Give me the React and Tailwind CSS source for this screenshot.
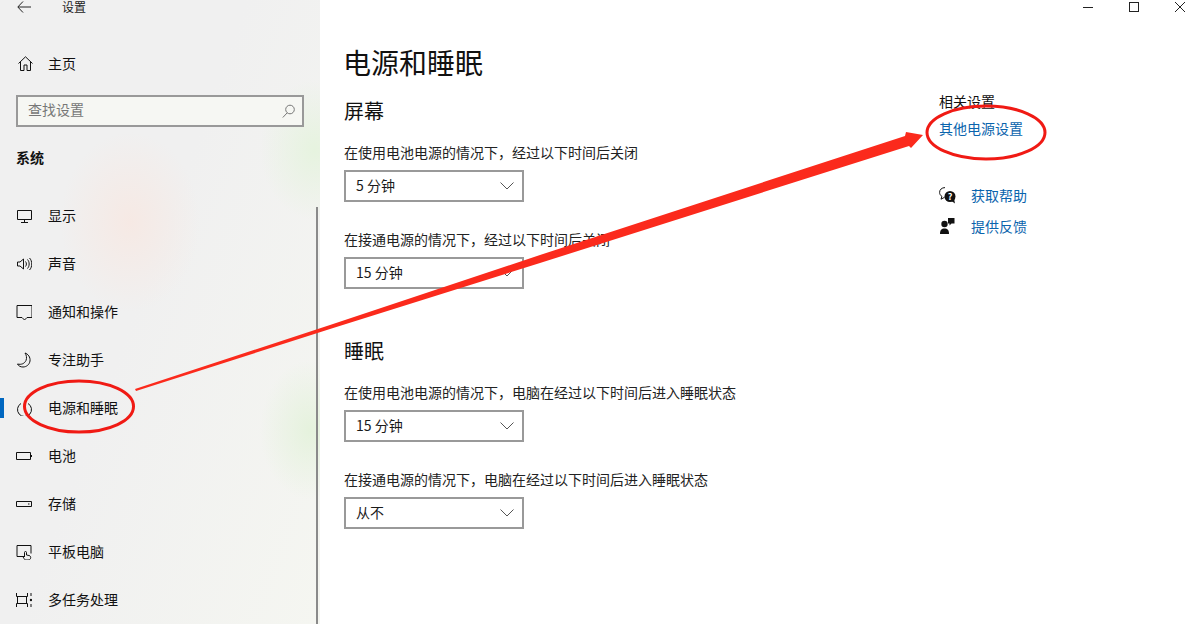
const font = { fontFamily: '"Noto Sans CJK SC", "Noto Sans", sans-serif' };

function Ico({ children, w = 16, h = 16, cls = "" }) {
  return (
    <svg width={w} height={h} viewBox={`0 0 ${w} ${h}`} fill="none" stroke="#111" strokeWidth="1" className={"shrink-0 " + cls}>
      {children}
    </svg>
  );
}

const items = [
  ["显示", <Ico><path d="M1.500 2.500h14v9h-14zM8.500 11.500v3M5 14.500h7" /></Ico>],
  ["声音", <Ico><path d="M1.500 6v4h2.500l3.500 3V3L4 6zM9.500 5.500c1.200 1.400 1.200 3.600 0 5M11.500 3.500c2.200 2.500 2.200 6.500 0 9M13.500 2c3 3 3 9 0 12" /></Ico>],
  ["通知和操作", <Ico><path d="M1 1.500h15v12h-5l-2.500 2.500L6 13.500H1z" /></Ico>],
  ["专注助手", <Ico><path d="M9 1c3 1 5.500 4 5 8-.5 3.500-3.500 6-7 6-2.500 0-4.500-1-5.500-3 4 1 7-.5 8.500-3.500C11 6 10.500 3 9 1z" /></Ico>],
  ["电源和睡眠", <Ico><path d="M5 3.500a7 7 0 1 0 7 0M8.500 1v7" /></Ico>],
  ["电池", <Ico><path d="M.5 4.500h14v7H.5zM15.500 7v2" /></Ico>],
  ["存储", <Ico><path d="M.5 5.500h15v5H.5zM12 8h1.500" /></Ico>],
  ["平板电脑", <Ico><path d="M9 12.500H1V1.500h14v8M8.500 13V8.500a1 1 0 0 1 2 0V11l2.500.5c1.500.3 2 1.500 1.500 3-.4 1-1 1.500-2.500 1.500h-2c-1 0-1.500-.5-2-1.500L6.500 12" /></Ico>],
  ["多任务处理", <Ico><path d="M.5 1v3.500h11V1M.5 15v-3.500h11V15M1.500 5v6M10.500 5v6M15 1v3M15 12v3" /><circle cx="15" cy="8" r="1.200" fill="#111" stroke="none" /></Ico>],
];

function Select({ value }) {
  return (
    <div className="flex h-8 w-[180px] items-center justify-between border-2 border-[#999999] pb-[2px] pl-[10px] pr-[8px] text-[14px] leading-5 text-[#1a1a1a]">
      <span>{value}</span>
      <svg width="14" height="8" viewBox="0 0 14 8" fill="none" stroke="#555" strokeWidth="1" className="mt-[2px]">
        <path d="M.5.500 7 7l6.500-6.500" />
      </svg>
    </div>
  );
}

export default function App() {
  return (
    <div style={font} className="relative flex h-[624px] w-[1196px] overflow-hidden bg-white text-black">
      <aside className="relative flex h-[624px] w-[320px] shrink-0 flex-col bg-[#f1f1f1] bg-[radial-gradient(ellipse_70px_90px_at_130px_222px,#f6e9e4,transparent),radial-gradient(ellipse_55px_70px_at_315px_150px,#e6f3df,transparent),radial-gradient(ellipse_50px_70px_at_310px_430px,#e5f2dd,transparent),linear-gradient(110deg,#f0f0f0_45%,#f5f6f1)]">
        <div className="flex h-[14px] items-center pl-[17px]">
          <svg width="14" height="12" viewBox="0 0 14 12" fill="none" stroke="#222" strokeWidth="1"><path d="M14 6H1M6 .5.800 6 6 11.500" /></svg>
          <span className="ml-[31px] text-[12px] leading-[12px] text-[#222]">设置</span>
        </div>
        <div className="mt-[39px] flex h-5 items-center pl-[18px] text-[14px] leading-5 text-[#111]">
          <Ico w={15} h={15}><path d="M.5 7.500 7.500.8l7 6.700M2.500 6v8.500h3.500V9h3v5.500h3.500V6" /></Ico>
          <span className="ml-[15px]">主页</span>
        </div>
        <div className="ml-4 mt-[22px] flex h-8 w-[288px] items-center justify-between border-2 border-[#999999] bg-[#f6f7f3] pb-[4px] pl-[10px] pr-[7px] text-[14px] leading-5 text-[#777]">
          <span>查找设置</span>
          <svg width="13" height="14" viewBox="0 0 13 14" fill="none" stroke="#777" strokeWidth="1" className="mt-[4px]"><circle cx="8" cy="5.500" r="4.300" /><path d="M5 9 .8 13.500" /></svg>
        </div>
        <div className="ml-4 mt-[20px] text-[14px] font-bold leading-5 text-[#111]">系统</div>
        <nav className="mt-[25px] flex flex-col">
          {items.map(([label, icon]) => (
            <div key={label} className="relative flex h-12 items-center pl-4 text-[14px] leading-5 text-[#111]">
              {label === "电源和睡眠" && <span className="absolute left-0 top-[14px] h-5 w-1 bg-[#0067c0]" />}
              {icon}
              <span className="mb-[2px] ml-4">{label}</span>
            </div>
          ))}
        </nav>
        <span className="absolute right-[2px] top-[207px] h-[417px] w-[2px] bg-[#8a8a8a]" />
      </aside>

      <main className="flex min-w-0 flex-1 flex-col">
        <div className="flex h-[14px] items-start justify-end">
          <div className="flex h-[14px] w-[46px] items-center justify-center">
            <span className="h-px w-[10px] bg-[#222]" />
          </div>
          <div className="flex h-[14px] w-[46px] items-start justify-center pt-[2px]">
            <span className="h-[10px] w-[10px] border border-[#222]" />
          </div>
          <div className="flex h-[14px] w-[39px] items-start justify-center pl-[7px] pt-[2px]">
            <svg width="10" height="10" viewBox="0 0 10 10" stroke="#222" strokeWidth="1"><path d="M0 0l10 10M10 0 0 10" /></svg>
          </div>
        </div>
        <div className="flex flex-1">
          <section className="flex-1 pl-6">
            <h1 className="-ml-px mt-[28px] text-[28px] font-normal leading-10 text-[#111]">电源和睡眠</h1>
            <h2 className="mt-[15px] text-[20px] font-normal leading-7 text-[#111]">屏幕</h2>
            <p className="mt-[17px] text-[14px] leading-5 text-[#222]">在使用电池电源的情况下，经过以下时间后关闭</p>
            <div className="mt-[8px]"><Select value="5 分钟" /></div>
            <p className="mt-[27px] text-[14px] leading-5 text-[#222]">在接通电源的情况下，经过以下时间后关闭</p>
            <div className="mt-[8px]"><Select value="15 分钟" /></div>
            <h2 className="mt-[48px] text-[20px] font-normal leading-7 text-[#111]">睡眠</h2>
            <p className="mt-[17px] text-[14px] leading-5 text-[#222]">在使用电池电源的情况下，电脑在经过以下时间后进入睡眠状态</p>
            <div className="mt-[8px]"><Select value="15 分钟" /></div>
            <p className="mt-[27px] text-[14px] leading-5 text-[#222]">在接通电源的情况下，电脑在经过以下时间后进入睡眠状态</p>
            <div className="mt-[8px]"><Select value="从不" /></div>
          </section>
          <section className="w-[257px] shrink-0 text-[14px] leading-5">
            <div className="mt-[77px] text-[#111]">相关设置</div>
            <div className="mt-[7px] text-[#0a64ad]">其他电源设置</div>
            <div className="mt-[47px] flex h-5 items-center text-[#0a64ad]">
              <svg width="17" height="17" viewBox="0 0 17 17" className="shrink-0">
                <path d="M6 .6C2.800.6.600 2.600.600 5.400c0 1.800.9 3.100 2.300 4L2 12.200 5.600 10.300" fill="#fff" stroke="#111" />
                <circle cx="11" cy="9.500" r="5.500" fill="#111" />
                <path d="M12.500 14l3.500 2.500-1-5z" fill="#111" />
                <text x="8.800" y="12.800" fontSize="9" fontWeight="700" fill="#fff">?</text>
              </svg>
              <span className="ml-[15px]">获取帮助</span>
            </div>
            <div className="mt-[11px] flex h-5 items-center text-[#0a64ad]">
              <svg width="16" height="16" viewBox="0 0 16 16" className="shrink-0">
                <circle cx="5.500" cy="6" r="3.200" fill="#111" />
                <path d="M1 16c0-4 1.500-5.500 4.500-5.500s4.500 1.500 4.500 5.500z" fill="#111" />
                <path d="M9 0h6.500v5.500h-3L10.500 7.500v-2H9z" fill="#111" />
              </svg>
              <span className="ml-4">提供反馈</span>
            </div>
          </section>
        </div>
      </main>

      <svg width="1196" height="624" viewBox="0 0 1196 624" fill="none" className="pointer-events-none absolute left-0 top-0">
        <ellipse cx="79" cy="406.500" rx="54.500" ry="25.500" stroke="#f01a14" strokeWidth="3" />
        <ellipse cx="986" cy="132.500" rx="59" ry="26.500" stroke="#f01a14" strokeWidth="3" />
        <path d="M135 389 330 325 540 255 905 136 906 132 923 135 911 148 909 146 540 263 330 329 136 391z" fill="#fb2a1c" />
      </svg>
    </div>
  );
}
